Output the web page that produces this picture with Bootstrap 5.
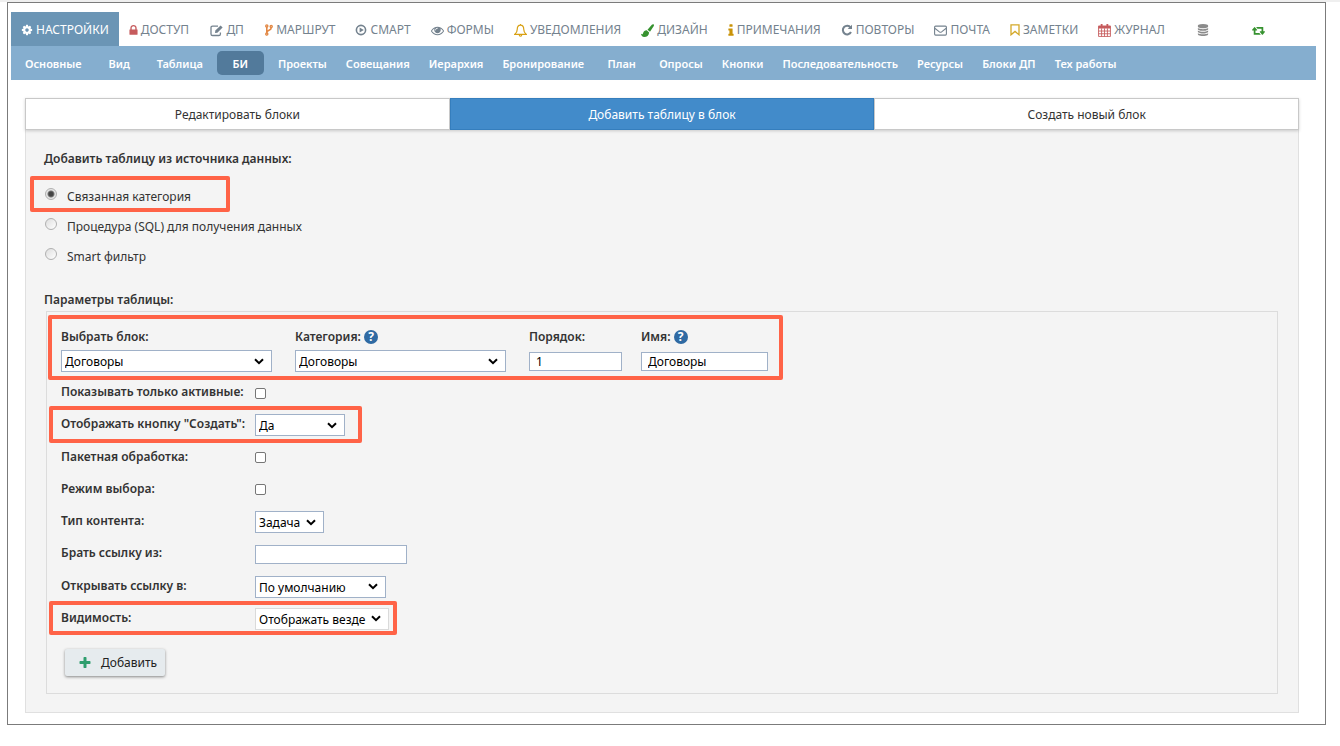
<!DOCTYPE html>
<html lang="ru">
<head>
<meta charset="utf-8">
<meta name="viewport" content="width=device-width, initial-scale=1">
<title>Настройки — БИ</title>
<link href="https://cdn.jsdelivr.net/npm/bootstrap@5.3.0/dist/css/bootstrap.min.css" rel="stylesheet">
<style>
  body { font: 12px/16px "Noto Sans", "Open Sans", sans-serif; color: #333; background: #fff; border-top: 2px solid #efefef; }
  .frame { margin: 0 14px 20px 7px; padding: 9px 9px 11px 3px; border: 1px solid #7b7b7b; }
  .ico { width: 12px; height: 12px; flex: none; fill: currentColor; }
  .ico.wide { width: 13px; height: 13px; }
  .stroke { fill: none; stroke: currentColor; stroke-width: 1.3; }
  .red { color: #c65b5d; }
  .green { color: #36922f; }

  .main-tabs .nav-link { display: flex; align-items: center; justify-content: center; gap: 3px; height: 34px; min-width: 56px; padding: 2px 10px 0; font-size: 12px; white-space: nowrap; color: #74828e; border-radius: 0; }
  .main-tabs .nav-link.active { background: #6b95b5; color: #fff; }
  .sub-tabs { height: 34px; padding-left: 5px; background: #85aecf; }
  .sub-tabs .nav-item { min-width: 56px; display: flex; justify-content: center; }
  .sub-tabs .nav-link { min-width: 47px; height: 24px; padding: 0 10px 0 9px; text-align: center; font-size: 11px; line-height: 26px; font-weight: 600; color: #fff; white-space: nowrap; }
  .sub-tabs .nav-link.active { background: #527a9b; border-radius: 5px; }

  .workspace { margin: 18px 17px 0 14px; }
  .mode-tabs .btn { flex: 1 1 0; height: 32px; padding: 0; font-size: 12px; line-height: 32px; color: #333; background: #fff; border: 1px solid #c8c8c8; border-radius: 0; }
  .mode-tabs .btn.active { background: #428bca; border-color: #357ebd; color: #fff; }
  .mode-tabs { box-shadow: 0 1px 3px rgba(0,0,0,.18); position: relative; }
  .panel { padding: 20px 20px 18px 18px; background: #f4f4f4; border: 1px solid #e0e0e0; border-top: 0; }
  .head { font-size: 12px; line-height: 18px; font-weight: 600; margin: 0; }

  .sources { padding: 19px 0 14px; }
  .source { display: flex; align-items: flex-start; height: 30px; }
  .source label { padding: 1px 0 0 10px; line-height: 18px; }
  .source input { appearance: none; width: 12px; height: 12px; margin: 1px 0 0 1px; border: 1px solid #b0b0b0; border-radius: 50%; background: linear-gradient(135deg, #ddd, #fff); }
  .source input:checked { background: radial-gradient(circle, #444 0 2px, #777 3px, #e6e6e6 4px); }

  .params { margin: 2px 0 0 2px; padding: 16px 14px 17px; border: 1px solid #dcdcdc; }
  .params label { font-weight: 600; line-height: 18px; white-space: nowrap; }
  .top-fields { display: grid; grid-template-columns: 215px 215px 93px 127px; column-gap: 19px; width: max-content; }
  .top-fields .slot { display: flex; align-items: center; height: 22px; margin-top: 4px; }
  .help { display: inline-flex; align-items: center; justify-content: center; width: 14px; height: 14px; border-radius: 50%; background: #2f6aa3; color: #fff; font-weight: 700; font-size: 12px; line-height: 14px; }

  .params .form-select, .params .form-control { font-size: 12px; line-height: 18px; color: #000; background-color: #fff; border: 1px solid #a0b1c8; border-radius: 0; }
  .params .form-select { height: 22px; padding: 2px 20px 0 3px; background: #fff url("data:image/svg+xml,%3Csvg xmlns='http://www.w3.org/2000/svg' viewBox='0 0 10 7'%3E%3Cpath d='M1 1.2 5 5.2 9 1.2' fill='none' stroke='%23000' stroke-width='2'/%3E%3C/svg%3E") no-repeat right 7px center / 10px 7px; }
  .params .form-control { min-height: 0; height: 19px; padding: 1px 6px 0; line-height: 16px; }
  .rows { display: grid; grid-auto-rows: 1fr; min-height: 258px; margin-top: 4px; }
  .field { display: grid; grid-template-columns: 194px max-content; align-items: center; }
  .params .form-check-input { width: 11px; height: 11px; margin: 2px 0 0 0; border: 1px solid #767676; border-radius: 2px; background-color: #fff; }
  .field .form-select, .field .form-control { margin-top: 2px; }
  .w-short { width: 69px; } .w-yes { width: 90px; } .w-mid { width: 131px; } .w-long { width: 134px; } .w-text { width: 152px; } .params .w-block { width: 211px; }
  .params .form-select.pale { border-color: #dadada; }

  .outlined { position: relative; }
  .outlined::after { content: ""; position: absolute; inset: var(--in); border: 4px solid #ff6347; border-radius: 2px; pointer-events: none; }
  .on-source::after { --in: -11px auto 5px -14px; width: 200px; }
  .on-top::after { --in: -13px -15px -8px -13px; }
  .on-yes::after { --in: -2px auto -2px -12px; width: 313px; }
  .on-see::after { --in: -1px auto -1px -12px; width: 348px; }

  .btn-add { display: flex; align-items: center; gap: 9px; height: 27px; margin: 15px 0 0 4px; padding: 0 8px 0 13px; font-size: 12px; color: #222; background: #e6ebee; border: 0; border-radius: 2px; box-shadow: 0 1px 3px rgba(0,0,0,.45); }
  .btn-add .ico { color: #2f9e6e; width: 14px; height: 14px; }
</style>
</head>
<body>
<div class="frame">
  <nav aria-label="Разделы">
    <ul class="nav main-tabs flex-nowrap">
      <li><a class="nav-link active" href="#"><svg class="ico" viewBox="0 0 1792 1792"><path d="M1152 896q0-106-75-181t-181-75-181 75-75 181 75 181 181 75 181-75 75-181zm512-109v222q0 12-8 23t-20 13l-185 28q-19 54-39 91 35 50 107 138 10 12 10 25t-9 23q-27 37-99 108t-94 71q-12 0-26-9l-138-108q-44 23-91 38-16 136-29 186-7 28-36 28h-222q-14 0-24.500-8.500t-11.500-21.500l-28-184q-49-16-90-37l-141 107q-10 9-25 9-14 0-25-11-126-114-165-168-7-10-7-23 0-12 8-23 15-21 51-66.500t54-70.500q-27-50-41-99l-183-27q-13-2-21-12.500t-8-23.500v-222q0-12 8-23t19-13l186-28q14-46 39-92-40-57-107-138-10-12-10-24 0-10 9-23 26-36 98.500-107.500t94.500-71.500q13 0 26 10l138 107q44-23 91-38 16-136 29-186 7-28 36-28h222q14 0 24.500 8.500t11.500 21.500l28 184q49 16 90 37l142-107q9-9 24-9 13 0 25 10 129 119 165 170 7 8 7 22 0 12-8 23-15 21-51 66.500t-54 70.500q26 50 41 98l183 28q13 2 21 12.500t8 23.500z"/></svg>НАСТРОЙКИ</a></li>
      <li><a class="nav-link" href="#"><svg class="ico red" style="width:9px" viewBox="256 100 1280 1500"><path d="M640 768h512v-192q0-106-75-181t-181-75-181 75-75 181v192zm832 96v576q0 40-28 68t-68 28h-960q-40 0-68-28t-28-68v-576q0-40 28-68t68-28h32v-192q0-184 132-316t316-132 316 132 132 316v192h32q40 0 68 28t28 68z"/></svg>ДОСТУП</a></li>
      <li><a class="nav-link" href="#"><svg class="ico stroke wide" viewBox="0 0 13 12"><path d="M8 1.6H2.600Q1 1.600 1 3.200v6.200Q1 11 2.600 11h6.200q1.600 0 1.600-1.600V8"/><path d="m5 8.500.3-2.400L10.600.9l2 2L7.400 8.200z" fill="currentColor" stroke="none"/></svg>ДП</a></li>
      <li><a class="nav-link" href="#"><svg class="ico stroke" style="color:#e28743;width:8px" viewBox="0 0 8 12"><circle cx="1.800" cy="1.900" r="1.100"/><circle cx="1.800" cy="10.100" r="1.100"/><circle cx="6.200" cy="2.600" r="1.100"/><path d="M1.800 3v6M6.200 3.800C6.200 7 2.100 5.600 1.800 8.600" stroke-width="1.600"/></svg>МАРШРУТ</a></li>
      <li><a class="nav-link" href="#"><svg class="ico stroke" viewBox="0 0 12 12"><circle cx="6" cy="6" r="4.600" stroke-width="1.600"/><path d="M4.600 3.500v5L8.800 6z" fill="currentColor" stroke="none"/></svg>СМАРТ</a></li>
      <li><a class="nav-link" href="#"><svg class="ico wide" viewBox="0 0 1792 1792"><path d="M1664 960q-152-236-381-353 61 104 61 225 0 185-131.500 316.500t-316.500 131.500-316.500-131.500-131.500-316.500q0-121 61-225-229 117-381 353 133 205 333.500 326.500t434.500 121.500 434.500-121.500 333.500-326.500zm-720-384q0-20-14-34t-34-14q-125 0-214.500 89.500t-89.500 214.500q0 20 14 34t34 14 34-14 14-34q0-86 61-147t147-61q20 0 34-14t14-34zm848 384q0 34-20 69-140 230-376.500 368.500t-499.500 138.500-499.500-139-376.500-368q-20-35-20-69t20-69q140-229 376.500-368t499.500-139 499.500 139 376.500 368q20 35 20 69z"/></svg>ФОРМЫ</a></li>
      <li><a class="nav-link" href="#"><svg class="ico stroke wide" style="color:#d8a012;stroke-width:1.1" viewBox="0 0 12 12"><path d="M6 1C3.800 1 3 3 3 4.800 3 7.400 2 8.500.8 9.500h10.400C10 8.500 9 7.400 9 4.800 9 3 8.200 1 6 1zM6 0v1M4.800 9.600c0 2.200 2.400 2.200 2.400 0"/></svg>УВЕДОМЛЕНИЯ</a></li>
      <li><a class="nav-link" href="#"><svg class="ico wide green" viewBox="0 0 12 12"><path d="M11.600.3c.7.6.3 1.300-.1 2L8.300 7.200 6 5.200 10 .8c.4-.5 1-.9 1.600-.5zM5.300 5.800l2.200 2C7.300 10.600 5.400 12 3 12 1.200 12 .2 10.700 0 9c.8.5 1.400.8 1.800-.3.600-1.800 1.700-2.900 3.500-2.900z"/></svg>ДИЗАЙН</a></li>
      <li><a class="nav-link" href="#"><svg class="ico" style="color:#c99308;width:6px" viewBox="576 100 640 1460"><path d="M1216 1344v128q0 26-19 45t-45 19h-512q-26 0-45-19t-19-45v-128q0-26 19-45t45-19h64v-384h-64q-26 0-45-19t-19-45v-128q0-26 19-45t45-19h384q26 0 45 19t19 45v576h64q26 0 45 19t19 45zm-128-1152v192q0 26-19 45t-45 19h-256q-26 0-45-19t-19-45v-192q0-26 19-45t45-19h256q26 0 45 19t19 45z"/></svg>ПРИМЕЧАНИЯ</a></li>
      <li><a class="nav-link" href="#"><svg class="ico stroke" viewBox="0 0 12 12"><path d="M9.600 3.500A4.300 4.300 0 1 0 10 8" stroke-width="2"/><path d="M11 .8v4.300H6.700z" fill="currentColor" stroke="none"/></svg>ПОВТОРЫ</a></li>
      <li><a class="nav-link" href="#"><svg class="ico stroke wide" style="stroke-width:1.1" viewBox="0 0 13 12"><rect x=".6" y="1.600" width="11.800" height="9" rx="1"/><path d="M.8 3.800 5.400 7.400q1.100.8 2.200 0L12.200 3.800"/></svg>ПОЧТА</a></li>
      <li><a class="nav-link" href="#"><svg class="ico stroke" style="color:#d4a92a;width:10px" viewBox="0 0 10 12"><path d="M1 .8h8v10L5 7.400 1 10.800z"/></svg>ЗАМЕТКИ</a></li>
      <li><a class="nav-link" href="#"><svg class="ico stroke wide red" style="stroke-width:.8" viewBox="0 0 12 12"><path d="M.5 2h11v9.500H.5zM.5 6.500h11M.5 9h11M3.300 4v7.500M6 4v7.500M8.700 4v7.500"/><path d="M.4 1.600h11.200v2.600H.4zM2.500 0h1.700v3H2.500zM7.800 0h1.700v3H7.800z" fill="currentColor" stroke="none"/></svg>ЖУРНАЛ</a></li>
      <li><a class="nav-link" href="#" aria-label="База данных"><svg class="ico" style="color:#8b8b8b" viewBox="0 0 1792 1792"><path d="M896 768q237 0 443-43t325-127v170q0 69-103 128t-280 93.500-385 34.500-385-34.500-280-93.500-103-128v-170q119 84 325 127t443 43zm0 768q237 0 443-43t325-127v170q0 69-103 128t-280 93.500-385 34.500-385-34.500-280-93.500-103-128v-170q119 84 325 127t443 43zm0-384q237 0 443-43t325-127v170q0 69-103 128t-280 93.500-385 34.500-385-34.500-280-93.500-103-128v-170q119 84 325 127t443 43zm0-1152q208 0 385 34.500t280 93.500 103 128v128q0 69-103 128t-280 93.500-385 34.500-385-34.500-280-93.500-103-128v-128q0-69 103-128t280-93.500 385-34.500z"/></svg></a></li>
      <li><a class="nav-link" href="#" aria-label="Обновить"><svg class="ico wide green" viewBox="0 0 1920 1792"><path d="M1280 1504q0 13-9.500 22.500t-22.500 9.500h-960q-8 0-13.500-2t-9-7-5.500-8-3-11.500-1-11.500v-600h-192q-26 0-45-19t-19-45q0-24 15-41l320-384q19-22 49-22t49 22l320 384q15 17 15 41 0 26-19 45t-45 19h-192v384h576q16 0 25 11l160 192q7 10 7 21zm640-416q0 24-15 41l-320 384q-20 23-49 23t-49-23l-320-384q-15-17-15-41 0-26 19-45t45-19h192v-384h-576q-16 0-25-12l-160-192q-7-9-7-20 0-13 9.500-22.500t22.500-9.500h960q8 0 13.500 2t9 7 5.500 8 3 11.500 1 11.500v600h192q26 0 45 19t19 45z"/></svg></a></li>
    </ul>
    <ul class="nav nav-pills sub-tabs flex-nowrap align-items-center">
      <li class="nav-item"><a class="nav-link" href="#">Основные</a></li>
      <li class="nav-item"><a class="nav-link" href="#">Вид</a></li>
      <li class="nav-item"><a class="nav-link" href="#">Таблица</a></li>
      <li class="nav-item"><a class="nav-link active" href="#">БИ</a></li>
      <li class="nav-item"><a class="nav-link" href="#">Проекты</a></li>
      <li class="nav-item"><a class="nav-link" href="#">Совещания</a></li>
      <li class="nav-item"><a class="nav-link" href="#">Иерархия</a></li>
      <li class="nav-item"><a class="nav-link" href="#">Бронирование</a></li>
      <li class="nav-item"><a class="nav-link" href="#">План</a></li>
      <li class="nav-item"><a class="nav-link" href="#">Опросы</a></li>
      <li class="nav-item"><a class="nav-link" href="#">Кнопки</a></li>
      <li class="nav-item"><a class="nav-link" href="#">Последовательность</a></li>
      <li class="nav-item"><a class="nav-link" href="#">Ресурсы</a></li>
      <li class="nav-item"><a class="nav-link" href="#">Блоки ДП</a></li>
      <li class="nav-item"><a class="nav-link" href="#">Тех работы</a></li>
    </ul>
  </nav>

  <main class="workspace">
    <div class="mode-tabs d-flex">
      <button type="button" class="btn">Редактировать блоки</button>
      <button type="button" class="btn active">Добавить таблицу в блок</button>
      <button type="button" class="btn">Создать новый блок</button>
    </div>
    <form class="panel">
      <h2 class="head">Добавить таблицу из источника данных:</h2>
      <div class="sources">
        <div class="source outlined on-source"><input type="radio" name="src" id="s1" checked><label for="s1">Связанная категория</label></div>
        <div class="source"><input type="radio" name="src" id="s2"><label for="s2">Процедура (SQL) для получения данных</label></div>
        <div class="source"><input type="radio" name="src" id="s3"><label for="s3">Smart фильтр</label></div>
      </div>
      <h2 class="head">Параметры таблицы:</h2>
      <section class="params">
        <div class="top-fields outlined on-top">
          <div><label for="blk">Выбрать блок:</label><div class="slot"><select class="form-select w-block" id="blk"><option>Договоры</option></select></div></div>
          <div><label for="cat">Категория: <span class="help">?</span></label><div class="slot"><select class="form-select w-block" id="cat"><option>Договоры</option></select></div></div>
          <div><label for="ord">Порядок:</label><div class="slot"><input class="form-control" id="ord" value="1"></div></div>
          <div><label for="nam">Имя: <span class="help">?</span></label><div class="slot"><input class="form-control" id="nam" value="Договоры"></div></div>
        </div>
        <div class="rows">
          <div class="field"><label for="f1">Показывать только активные:</label><input type="checkbox" class="form-check-input" id="f1"></div>
          <div class="field outlined on-yes"><label for="f2">Отображать кнопку "Создать":</label><select class="form-select w-yes" id="f2"><option>Да</option></select></div>
          <div class="field"><label for="f3">Пакетная обработка:</label><input type="checkbox" class="form-check-input" id="f3"></div>
          <div class="field"><label for="f4">Режим выбора:</label><input type="checkbox" class="form-check-input" id="f4"></div>
          <div class="field"><label for="f5">Тип контента:</label><select class="form-select w-short" id="f5"><option>Задача</option></select></div>
          <div class="field"><label for="f6">Брать ссылку из:</label><input class="form-control w-text" id="f6"></div>
          <div class="field"><label for="f7">Открывать ссылку в:</label><select class="form-select w-mid" id="f7"><option>По умолчанию</option></select></div>
          <div class="field outlined on-see"><label for="f8">Видимость:</label><select class="form-select pale w-long" id="f8"><option>Отображать везде</option></select></div>
        </div>
        <button type="button" class="btn btn-add"><svg class="ico" viewBox="0 0 1792 1792"><path d="M1600 736v192q0 40-28 68t-68 28h-416v416q0 40-28 68t-68 28h-192q-40 0-68-28t-28-68v-416h-416q-40 0-68-28t-28-68v-192q0-40 28-68t68-28h416v-416q0-40 28-68t68-28h192q40 0 68 28t28 68v416h416q40 0 68 28t28 68z"/></svg>Добавить</button>
      </section>
    </form>
  </main>
</div>
<script src="https://cdn.jsdelivr.net/npm/bootstrap@5.3.0/dist/js/bootstrap.bundle.min.js"></script>
</body>
</html>
